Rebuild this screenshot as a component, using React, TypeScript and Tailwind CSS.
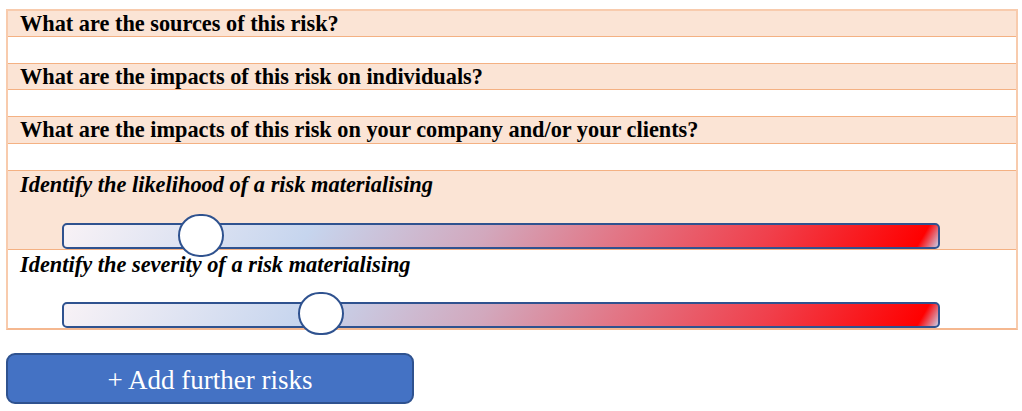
const questions = [
  "What are the sources of this risk?",
  "What are the impacts of this risk on individuals?",
  "What are the impacts of this risk on your company and/or your clients?",
];

const rowHeights = [
  ["h-[26px]", "h-[27px]"],
  ["h-[26px]", "h-[27px]"],
  ["h-[27px]", "h-[27px]"],
];

function RiskSlider({ thumbLeft, thumbTop }: { thumbLeft: number; thumbTop: number }) {
  return (
    <div className="relative ml-[54px] h-[26px] w-[878px] rounded-[5px] border-2 border-[#2f528f] bg-[linear-gradient(120deg,#f8f2f6_0%,#c6d5ee_28%,#d2a8bd_48%,#e27686_63%,#f0404c_80%,#ff0000_97.6%,#c9cde6_100%)]">
      <div
        className="absolute z-10 h-[43px] w-[46px] rounded-full border-2 border-[#2f528f] bg-white"
        style={{ left: thumbLeft, top: thumbTop }}
      />
    </div>
  );
}

export default function App() {
  return (
    <div className="min-h-[411px] w-[1022px] bg-white pt-[9px] text-black [font-family:'Liberation_Serif',serif]">
      <div className="ml-[6px] w-[1012px] border-x-2 border-t-2 border-b-2 border-[#f8cbad] border-b-[#f5b890]">
        {questions.map((q, i) => (
          <div key={q}>
            <div
              className={`${rowHeights[i][0]} border-b border-[#f4b183] bg-[#fbe4d5] pl-[12px] text-[22.3px] font-bold leading-[25px]`}
            >
              {q}
            </div>
            <div className={`${rowHeights[i][1]} border-b border-[#f4b183] bg-white`} />
          </div>
        ))}

        <div className="flex h-[79px] flex-col border-b border-[#f4b183] bg-[#fbe4d5]">
          <div className="pl-[12px] pt-[1px] text-[22.4px] font-bold italic leading-[26px]">
            Identify the likelihood of a risk materialising
          </div>
          <div className="mt-auto">
            <RiskSlider thumbLeft={114} thumbTop={-11} />
          </div>
        </div>

        <div className="flex h-[78px] flex-col bg-white">
          <div className="pl-[12px] pt-[2px] text-[22.4px] font-bold italic leading-[26px]">
            Identify the severity of a risk materialising
          </div>
          <div className="mt-auto">
            <RiskSlider thumbLeft={234} thumbTop={-12} />
          </div>
        </div>
      </div>

      <button className="ml-[6px] mt-[23px] flex h-[51px] w-[408px] items-center justify-center rounded-[9px] border-2 border-[#2f528f] bg-[#4472c4] pt-[4px] text-[27px] leading-none text-white">
        + Add further risks
      </button>
    </div>
  );
}
